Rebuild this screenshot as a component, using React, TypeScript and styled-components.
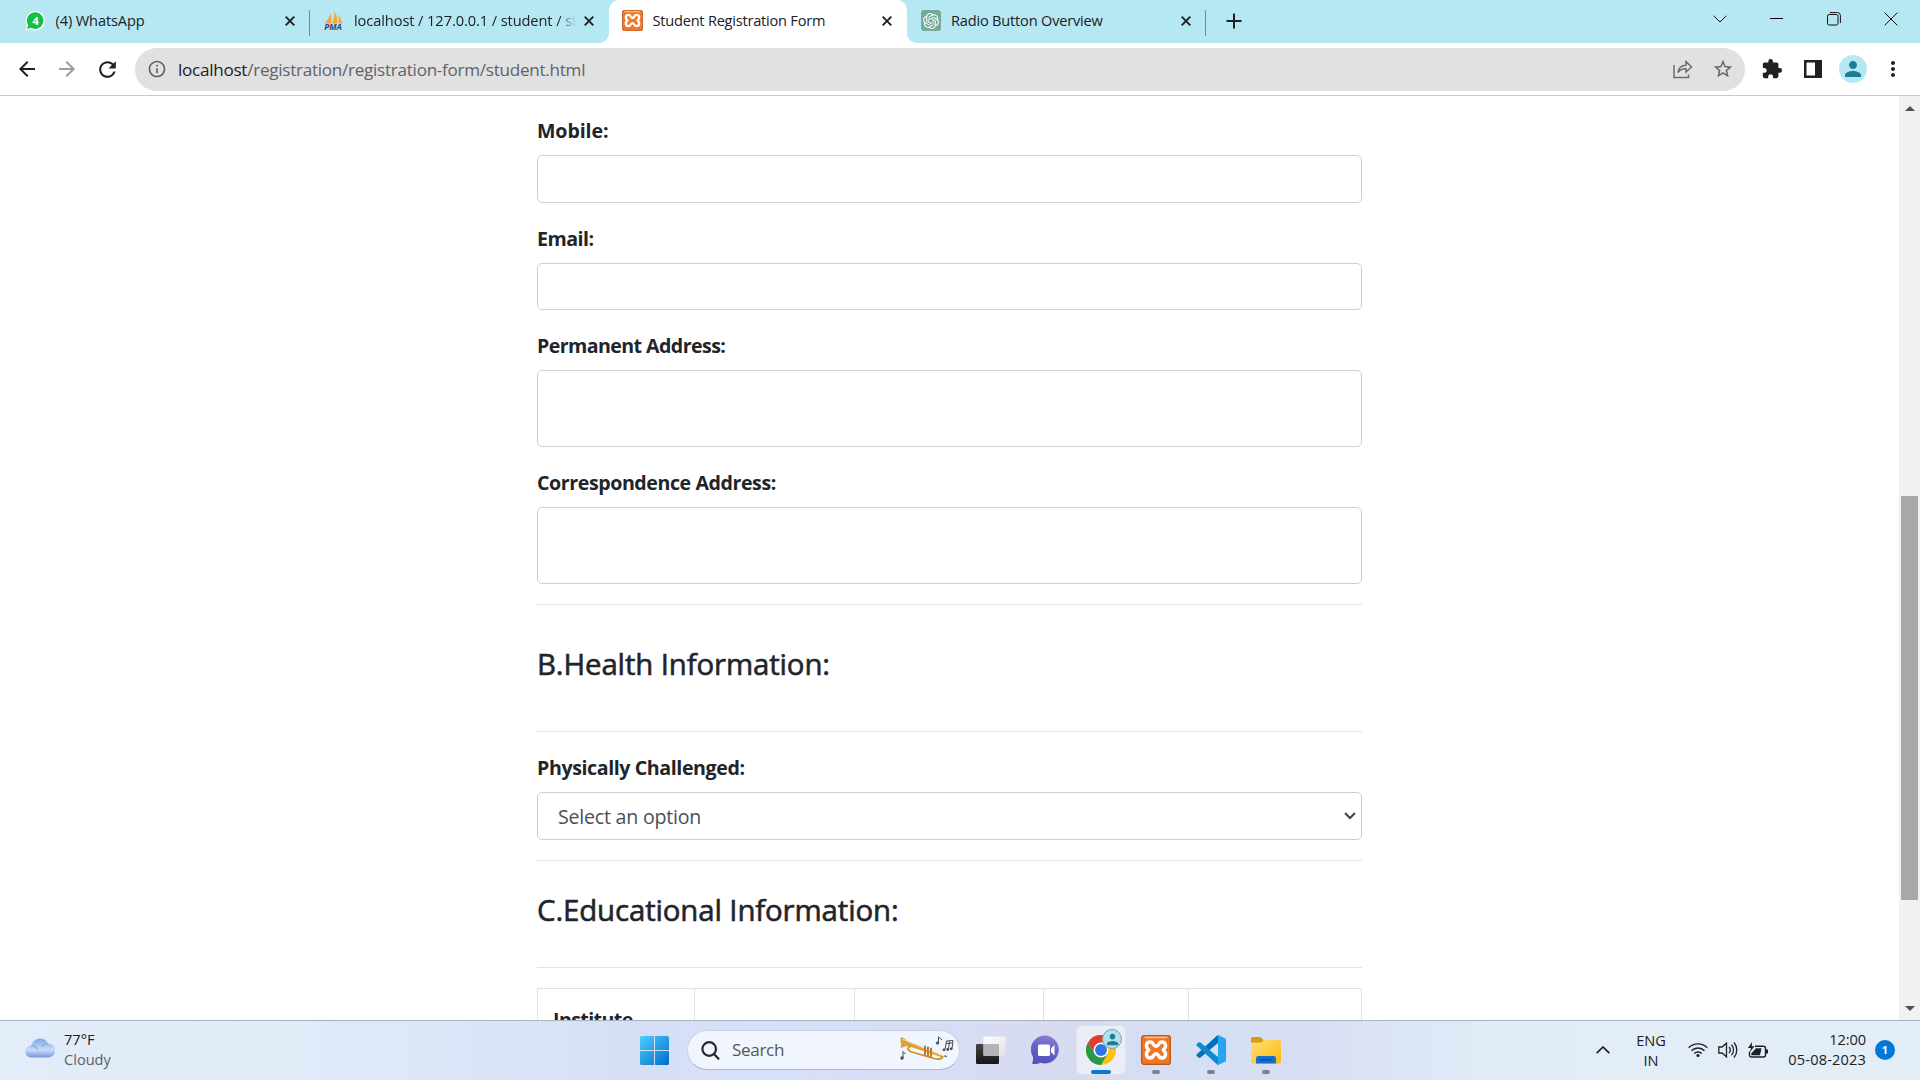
import React from "react";
import styled, { createGlobalStyle } from "styled-components";
import { MdArrowBack, MdArrowForward, MdRefresh, MdInfoOutline, MdStarBorder, MdExtension, MdPerson, MdMoreVert } from "react-icons/md";
import { SiOpenai } from "react-icons/si";

const Global = createGlobalStyle`
  * { box-sizing: border-box; }
  html, body { margin: 0; padding: 0; overflow: hidden; }
  body { font-family: "Open Sans", "Noto Sans", sans-serif; color: #212529; }
  svg { display: block; flex: none; }
`;

const Screen = styled.div`
  width: 1920px;
  height: 1080px;
  display: flex;
  flex-direction: column;
  background: #fff;
  overflow: hidden;
`;

const Label = styled.span<{ $size: number; $ls?: number; $color?: string; $weight?: number }>`
  font-size: ${(p) => p.$size}px;
  letter-spacing: ${(p) => p.$ls || 0}px;
  color: ${(p) => p.$color || "#202124"};
  font-weight: ${(p) => p.$weight || 400};
  white-space: nowrap;
`;

/* ---------- tab strip ---------- */
const TabStrip = styled.div`
  height: 43px;
  display: flex;
  background: #b5e8f3;
  padding-left: 11.5px;
  flex: none;
`;

const Tab = styled.div<{ $active?: boolean; $divider?: boolean }>`
  width: 298.5px;
  height: 43px;
  padding: 0 12px 2px 13px;
  display: flex;
  align-items: center;
  position: relative;
  background: ${(p) => (p.$active ? "#fff" : "transparent")};
  border-radius: 10px 10px 0 0;
  ${(p) =>
    p.$active
      ? `&::before, &::after { content: ""; position: absolute; bottom: 0; width: 10px; height: 10px; }
         &::before { left: -10px; background: radial-gradient(circle at 0 0, transparent 9.5px, #fff 10.5px); }
         &::after { right: -10px; background: radial-gradient(circle at 100% 0, transparent 9.5px, #fff 10.5px); }`
      : ""}
  ${(p) =>
    p.$divider
      ? `&::after { content: ""; position: absolute; right: 0; top: 10px; width: 1px; height: 26px; background: #6f8c93; }`
      : ""}
`;

const TabIcon = styled.div`
  width: 21px;
  height: 21px;
  margin-right: 10px;
  flex: none;
`;

const TabTitle = styled.div<{ $fade?: boolean }>`
  flex: 1;
  overflow: hidden;
  display: flex;
  margin-right: 5px;
  line-height: 24px;
  padding-bottom: 2px;
  ${(p) => (p.$fade ? "-webkit-mask-image: linear-gradient(90deg, #000 92%, transparent 100%);" : "")}
`;

const CloseBox = styled.div`
  width: 16px;
  height: 16px;
  flex: none;
  padding: 3px;
`;

const NewTab = styled.div`
  width: 56px;
  display: flex;
  align-items: center;
  justify-content: center;
  padding-bottom: 1px;
`;

const WindowControls = styled.div`
  margin-left: auto;
  padding-right: 1px;
  height: 37px;
  display: flex;
  align-items: center;
`;

const WinButton = styled.div`
  width: 57px;
  display: flex;
  justify-content: center;
`;

/* ---------- toolbar ---------- */
const Toolbar = styled.div`
  height: 53px;
  flex: none;
  display: flex;
  align-items: center;
  border-bottom: 1px solid #c8c9ca;
  padding: 0 8px 0 7px;
`;

const ToolButton = styled.div<{ $w?: number; $color?: string }>`
  width: ${(p) => p.$w || 40}px;
  height: 40px;
  display: flex;
  align-items: center;
  justify-content: center;
  color: ${(p) => p.$color || "#202124"};
`;

const Omnibox = styled.div`
  width: 1610px;
  height: 43px;
  margin-left: 8px;
  border-radius: 22px;
  background: #e1e1e1;
  display: flex;
  align-items: center;
  padding: 0 2px 0 2px;
`;

const Url = styled.div`
  flex: 1;
  padding-left: 1px;
  padding-top: 1px;
  line-height: 24px;
  white-space: nowrap;
`;

const Avatar = styled.div`
  width: 28px;
  height: 28px;
  border-radius: 50%;
  background: #b5e8f3;
  color: #1a7f95;
  display: flex;
  align-items: center;
  justify-content: center;
`;

/* ---------- page ---------- */
const Viewport = styled.div`
  height: 924px;
  flex: none;
  display: flex;
  overflow: hidden;
`;

const Page = styled.div`
  flex: 1;
  padding: 19px 0 0 537px;
`;

const Form = styled.div`
  width: 825px;
`;

const Group = styled.div<{ $top?: number }>`
  margin-bottom: 20px;
  padding-top: ${(p) => p.$top || 0}px;
`;

const FieldLabel = styled.label<{ $ls: number }>`
  display: block;
  height: 30px;
  margin-bottom: 10px;
  line-height: 31px;
  font-size: 19.6px;
  font-weight: 700;
  letter-spacing: ${(p) => p.$ls}px;
  white-space: nowrap;
`;

const Field = styled.div<{ $h: number }>`
  height: ${(p) => p.$h}px;
  border: 1px solid #cbd0d7;
  border-radius: 5px;
  display: flex;
  align-items: center;
  padding: 0 5px 0 20px;
  justify-content: space-between;
`;

const Rule = styled.div`
  height: 1px;
  background: #e3e4e5;
`;

const SectionTitle = styled.h2<{ $h: number; $top: number; $ls: number }>`
  margin: 0;
  height: ${(p) => p.$h}px;
  padding-top: ${(p) => p.$top}px;
  line-height: 40px;
  font-size: 29.4px;
  font-weight: 500;
  -webkit-text-stroke: 0.6px #212529;
  letter-spacing: ${(p) => p.$ls}px;
  white-space: nowrap;
`;

const Table = styled.div`
  margin-top: 20px;
  display: grid;
  grid-template-columns: 157px 160px 189px 145px 173px;
  border-top: 1px solid #dee2e6;
  border-left: 1px solid #dee2e6;
`;

const Cell = styled.div`
  height: 110px;
  border-right: 1px solid #dee2e6;
  padding: 15px;
  line-height: 31px;
`;

const Scrollbar = styled.div`
  width: 21px;
  background: #f1f1f1;
  display: flex;
  flex-direction: column;
  align-items: center;
  padding: 10px 0 9px;
`;

const Thumb = styled.div`
  width: 17px;
  height: 404px;
  margin: 385px 0 auto;
  background: #a8a8a8;
`;

/* ---------- taskbar ---------- */
const Taskbar = styled.div`
  height: 60px;
  flex: none;
  display: flex;
  align-items: center;
  padding-bottom: 1px;
  border-top: 1px solid #aab2c2;
  background: linear-gradient(90deg, #e2edf8 0, #e0ebf8 300px, #d9e2f7 560px, #d6def6 640px, #d5e2f9 760px, #d6ddf5 900px, #d8dbf0 1090px, #d4e0f5 1200px, #d8def3 1300px, #dfebf7 1480px, #e2edf8 1600px);
`;

const Weather = styled.div`
  width: 640px;
  padding: 0 0 3px 25px;
  display: flex;
  align-items: center;
  gap: 9px;
`;

const CloudIcon = styled.div`
  padding-bottom: 2px;
`;

const Stack = styled.div<{ $align?: string }>`
  display: flex;
  flex-direction: column;
  align-items: ${(p) => p.$align || "flex-start"};
  line-height: 20px;
`;

const SearchPill = styled.div`
  width: 273px;
  height: 40px;
  margin: 0 7px 0 18px;
  border-radius: 20px;
  background: #f1f5fd;
  border: 1px solid #c9d2e8;
  border-bottom-color: #aeb6c9;
  display: flex;
  align-items: center;
  padding: 0 4px 0 13px;
`;

const SearchText = styled.div`
  flex: 1;
  padding-left: 12px;
  line-height: 24px;
`;

const AppTile = styled.div<{ $active?: boolean }>`
  width: 48px;
  height: 48px;
  margin-right: 7px;
  border-radius: 5px;
  background: ${(p) => (p.$active ? "#ebeef8" : "transparent")};
  box-shadow: ${(p) => (p.$active ? "0 0 0 1px #dfe1ee" : "none")};
  display: flex;
  flex-direction: column;
  align-items: center;
  padding-top: 9px;
  position: relative;
`;

const Indicator = styled.div<{ $active?: boolean }>`
  width: ${(p) => (p.$active ? 20 : 8)}px;
  height: 4px;
  margin-top: auto;
  border-radius: 2px;
  background: ${(p) => (p.$active ? "#0a78d4" : "#7f838e")};
`;

const ProfileBadge = styled.div`
  position: absolute;
  left: 25px;
  top: 3px;
  width: 20px;
  height: 20px;
  border-radius: 50%;
  background: #aee2ee;
  border: 1px solid #8f9ca5;
  color: #1a7f95;
  display: flex;
  align-items: center;
  justify-content: center;
`;

const Tray = styled.div`
  margin-left: auto;
  display: flex;
  align-items: center;
  padding-right: 25px;
`;

const Language = styled.div`
  width: 40px;
  margin-left: 21px;
`;

const Clock = styled.div`
  width: 90px;
  padding-bottom: 2px;
`;

const TrayIcons = styled.div`
  display: flex;
  align-items: center;
  gap: 10px;
  margin: 0 8px 0 17px;
`;

const Count = styled.div`
  width: 20px;
  height: 20px;
  margin-left: 9px;
  border-radius: 50%;
  background: #0078d7;
  display: flex;
  align-items: center;
  justify-content: center;
  line-height: 20px;
`;

const Close = () => (
  <CloseBox>
    <svg width="10" height="10" viewBox="0 0 10 10" stroke="#202124" strokeWidth="1.9">
      <path d="M.7.7 9.3 9.3M9.3.7.7 9.3" />
    </svg>
  </CloseBox>
);

const WhatsApp = () => (
  <svg width="21" height="21" viewBox="0 0 21 21">
    <path d="M.8 20.3 2 15.4A9.6 9.6 0 1 1 5.6 19z" fill="#fff" />
    <path d="M2 19 3.2 15.2A8.3 8.3 0 1 1 6 17.8z" fill="#12c143" />
    <text x="10.6" y="14.6" fontSize="11" fontWeight="700" fill="#fff" textAnchor="middle" fontFamily="Open Sans">4</text>
  </svg>
);

const Pma = () => (
  <svg width="21" height="21" viewBox="0 0 21 21">
    <path d="M7.5 2.5Q7 8 1.5 13.5H8Q9 8 7.5 2.5M11 .5Q12.500 7 9 13.5H14.500Q14.500 6 11 .5M14.800 4Q16.500 8 15.500 13.500H19.500Q18 8 14.800 4" fill="#f8a536" />
    <text x="10" y="20.4" fontSize="8.4" fontWeight="700" fontStyle="italic" fill="#3f3f74" textAnchor="middle" fontFamily="Open Sans">PMA</text>
  </svg>
);

const Xampp = ({ size }: { size: number }) => (
  <svg width={size} height={size} viewBox="0 0 30 30">
    <rect x=".6" y=".6" width="28.8" height="28.8" rx="2.500" fill="#f37623" stroke="#b5561c" strokeWidth="1.200" />
    <path d="M3 1.600H27L25.500 3.200H4.500z" fill="#f7b98c" />
    <path d="M7.800 15C4 12 5 7 9.300 7C13 7 12 11.500 15 11.500S17 7 20.700 7C25 7 26 12 22.200 15C26 18 25 23 20.700 23C17 23 18 18.700 15 18.700S13 23 9.300 23C5 23 4 18 7.800 15z" fill="none" stroke="#fff" strokeWidth="3.400" strokeLinejoin="round" />
  </svg>
);

const OpenAIBox = styled.div`
  width: 20px;
  height: 21px;
  background: #74aa9c;
  border-radius: 3px;
  margin-left: 1px;
  color: #fff;
  display: flex;
  align-items: center;
  justify-content: center;
`;

const Trumpet = () => (
  <svg width="56" height="28" viewBox="0 0 56 28">
    <path d="M2 1.500C4 0 6 3.500 9 5.500L44 19.500 43.500 21.500 9 10C6 9.500 3 12.500 1.500 11.500C3 8 .5 5 2 1.500z" fill="#dda13a" />
    <path d="M3 3 44 20" stroke="#f8d68a" strokeWidth="1" />
    <path d="M12 10C7 11 9 15 13 16L35 22.500C41 24 44 22 43.500 20" fill="none" stroke="#d39125" strokeWidth="1.800" />
    <path d="M26 11V20M29 12V21M32 13V22" stroke="#c07f1c" strokeWidth="2" />
    <path d="M25 10.500h2M28 11.500h2M31 12.500h2M45 20l3 .6" stroke="#7d7d84" strokeWidth="1.500" />
    <path d="M4 22V15.500L6.500 18M39.500 7V.8L43 4M46 13.500 47.500 5 54 4.500 53 12.500M47 7.500 53.500 7M50.500 5 49.500 13" fill="none" stroke="#4a4c53" strokeWidth="1" />
    <g fill="#4a4c53"><circle cx="3" cy="22" r="1.700" /><circle cx="38.500" cy="7" r="1.600" /><circle cx="45" cy="13.800" r="1.400" /><circle cx="48.700" cy="13.500" r="1.400" /><circle cx="52.200" cy="12.800" r="1.400" /></g>
  </svg>
);

const WindowsLogo = () => (
  <svg width="29" height="29" viewBox="0 0 29 29">
    <defs><linearGradient id="win" gradientUnits="userSpaceOnUse" x1="0" y1="0" x2="26" y2="29"><stop stopColor="#4fd0fb" /><stop offset="1" stopColor="#0270cf" /></linearGradient></defs>
    <path d="M1.500 0H14V14H0V1.500Q0 0 1.500 0M15 0H27.500Q29 0 29 1.500V14H15zM0 15H14V29H1.500Q0 29 0 27.500zM15 15H29V27.500Q29 29 27.500 29H15z" fill="url(#win)" />
  </svg>
);

const TaskView = () => (
  <svg width="30" height="30" viewBox="0 0 30 30">
    <defs>
      <linearGradient id="tv1" x1="0" y1="0" x2="0" y2="1"><stop stopColor="#454545" /><stop offset="1" stopColor="#161616" /></linearGradient>
      <linearGradient id="tv2" x1="0" y1="0" x2="1" y2="1"><stop stopColor="#fff" /><stop offset="1" stopColor="#e2e2e6" /></linearGradient>
    </defs>
    <rect x="0" y="9" width="23" height="20" rx="1.200" fill="url(#tv1)" />
    <rect x="7.500" y="1.500" width="22" height="19.500" rx="1.200" fill="url(#tv2)" />
    <path d="M7.500 9H23V21H8.500Q7.500 21 7.500 20z" fill="#b3b3b5" />
  </svg>
);

const Chat = () => (
  <svg width="30" height="30" viewBox="0 0 30 30">
    <defs><linearGradient id="chat" x1=".7" y1="0" x2=".4" y2="1"><stop stopColor="#8d7fd0" /><stop offset=".5" stopColor="#6364c6" /><stop offset="1" stopColor="#5450bd" /></linearGradient></defs>
    <path d="M1 28.500Q2.300 26 2 22A14 14 0 1 1 9.500 27.800Q5 29.800 1 28.500z" fill="url(#chat)" />
    <rect x="7" y="9.500" width="12" height="11.500" rx="1.500" fill="#fff" />
    <path d="M20 13.500 23.500 10V20.500L20 17z" fill="#fff" />
  </svg>
);

const Chrome = () => (
  <svg width="30" height="30" viewBox="0 0 48 48">
    <circle cx="24" cy="24" r="24" fill="#fbc116" />
    <path d="M3.200 12A24 24 0 0 0 24 48L34.400 30 24 24 13.600 30z" fill="#279847" />
    <path d="M3.200 12 13.600 30 24 24V12H44.800A24 24 0 0 0 3.200 12z" fill="#e33b2e" />
    <circle cx="24" cy="24" r="12" fill="#fff" />
    <circle cx="24" cy="24" r="9.500" fill="#2d76e8" />
  </svg>
);

const VsCode = () => (
  <svg width="30" height="30" viewBox="0 0 30 30">
    <path d="M22 0 22 8 4.500 22.500Q3.500 23.200 2.500 22.500L.7 20.900Q0 20 .8 19.200L20.300 1.200z" fill="#0271b8" />
    <path d="M22 30V22L4.500 7.500Q3.500 6.800 2.500 7.500L.7 9.100Q0 10 .8 10.800L20.300 28.800z" fill="#1188cf" />
    <path d="M22 0 29 3.200Q30 3.700 30 4.800V25.200Q30 26.300 29 26.800L22 30Q20.800 29.600 20.300 28.800Q22 29.200 22 27.500V2.500Q22 .8 20.300 1.200Q20.800.4 22 0z" fill="#27a4ef" />
  </svg>
);

const Folder = () => (
  <svg width="30" height="30" viewBox="0 0 30 30">
    <defs><linearGradient id="fold" x1="0" y1="0" x2="1" y2="1"><stop stopColor="#ffdf78" /><stop offset="1" stopColor="#fdb90c" /></linearGradient></defs>
    <path d="M0 4Q0 2 2 2H9.500L13 5.500V9H0z" fill="#d99a0b" />
    <path d="M0 7.500H10L13 5H28.500Q30 5 30 7V26.500Q30 28.500 28 28.500H2Q0 28.500 0 26.500z" fill="url(#fold)" />
    <path d="M5 28.500V23.500Q5 21 7.500 21H22.500Q25 21 25 23.500V28.500z" fill="#0f72d0" />
    <path d="M8.500 24.800h13" stroke="#0a4590" strokeWidth="1.200" />
  </svg>
);

const fields = [
  { name: "Mobile:", h: 48, ls: -0.1 },
  { name: "Email:", h: 47, ls: -0.5 },
  { name: "Permanent Address:", h: 77, ls: -0.57 },
  { name: "Correspondence Address:", h: 77, ls: -0.42 },
];

export default function App() {
  return (
    <Screen>
      <Global />
      <TabStrip>
        <Tab $divider>
          <TabIcon><WhatsApp /></TabIcon>
          <TabTitle><Label $size={14.6} $ls={-0.12}>(4) WhatsApp</Label></TabTitle>
          <Close />
        </Tab>
        <Tab>
          <TabIcon><Pma /></TabIcon>
          <TabTitle $fade><Label $size={14.6} $ls={-0.08}>localhost / 127.0.0.1 / student / st</Label></TabTitle>
          <Close />
        </Tab>
        <Tab $active>
          <TabIcon><Xampp size={21} /></TabIcon>
          <TabTitle><Label $size={14.6} $ls={-0.23}>Student Registration Form</Label></TabTitle>
          <Close />
        </Tab>
        <Tab $divider>
          <TabIcon><OpenAIBox><SiOpenai size={16} /></OpenAIBox></TabIcon>
          <TabTitle><Label $size={14.6} $ls={-0.2}>Radio Button Overview</Label></TabTitle>
          <Close />
        </Tab>
        <NewTab>
          <svg width="16" height="16" viewBox="0 0 16 16" stroke="#202124" strokeWidth="2"><path d="M8 .5v15M.5 8h15" /></svg>
        </NewTab>
        <WindowControls>
          <WinButton><svg width="14" height="8" viewBox="0 0 14 8" fill="none" stroke="#111"><path d="M.7.8 7 7 13.300.8" /></svg></WinButton>
          <WinButton><svg width="13" height="1" viewBox="0 0 13 1" shapeRendering="crispEdges"><path d="M0 .5h13" stroke="#000" /></svg></WinButton>
          <WinButton>
            <svg width="14" height="14" viewBox="0 0 14 14" fill="none" stroke="#111"><rect x=".5" y="2.500" width="10.500" height="10.500" rx="1.800" /><path d="M2.800.6H10.500Q13.400.6 13.400 3.500V11" /></svg>
          </WinButton>
          <WinButton><svg width="14" height="14" viewBox="0 0 14 14" stroke="#111"><path d="M.6.6 13.400 13.400M13.400.6.6 13.400" /></svg></WinButton>
        </WindowControls>
      </TabStrip>

      <Toolbar>
        <ToolButton><MdArrowBack size={24} /></ToolButton>
        <ToolButton $color="#9b9c9e"><MdArrowForward size={24} /></ToolButton>
        <ToolButton><MdRefresh size={25} /></ToolButton>
        <Omnibox>
          <ToolButton $color="#5f6368"><MdInfoOutline size={20} /></ToolButton>
          <Url>
            <Label $size={17.1} $ls={-0.27}>localhost</Label>
            <Label $size={17.1} $ls={-0.27} $color="#5f6368">/registration/registration-form/student.html</Label>
          </Url>
          <ToolButton>
            <svg width="20" height="19" viewBox="0 0 20 19" fill="none" stroke="#6b6e72" strokeWidth="1.500"><path d="M1 5v12.500h14.500V14.500M5 12.500C5.500 8 8.500 5.500 13 5.300V1.500L18.500 7 13 12V8.800C9.500 8.700 7 9.500 5 12.500z" /></svg>
          </ToolButton>
          <ToolButton $color="#5f6368"><MdStarBorder size={22} /></ToolButton>
        </Omnibox>
        <ToolButton $w={54}><MdExtension size={22} /></ToolButton>
        <ToolButton $w={28}>
          <svg width="18" height="18" viewBox="0 0 18 18"><path d="M0 0H18V18H0zM2.500 2.500V15.500H11V2.500z" fill="#202124" fillRule="evenodd" /></svg>
        </ToolButton>
        <ToolButton $w={52}><Avatar><MdPerson size={24} /></Avatar></ToolButton>
        <ToolButton $w={28}><MdMoreVert size={24} /></ToolButton>
      </Toolbar>

      <Viewport>
        <Page>
          <Form>
            {fields.map((f) => (
              <Group key={f.name}>
                <FieldLabel $ls={f.ls}>{f.name}</FieldLabel>
                <Field $h={f.h} />
              </Group>
            ))}
            <Rule />
            <SectionTitle $h={126} $top={39} $ls={-0.12}>B.Health Information:</SectionTitle>
            <Rule />
            <Group $top={20}>
              <FieldLabel $ls={-0.4}>Physically Challenged:</FieldLabel>
              <Field $h={48}>
                <Label $size={19.6} $color="#495057" $ls={-0.22}>Select an option</Label>
                <svg width="12" height="8" viewBox="0 0 12 8" fill="none" stroke="#3f454c" strokeWidth="2"><path d="M1 1 6 6 11 1" /></svg>
              </Field>
            </Group>
            <Rule />
            <SectionTitle $h={106} $top={29} $ls={-0.12}>C.Educational Information:</SectionTitle>
            <Rule />
            <Table>
              <Cell><Label $size={19.6} $weight={700} $ls={-0.6} $color="#212529">Institute</Label></Cell>
              <Cell />
              <Cell />
              <Cell />
              <Cell />
            </Table>
          </Form>
        </Page>
        <Scrollbar>
          <svg width="10" height="5" viewBox="0 0 10 5"><path d="M5 0 10 5H0z" fill="#505050" /></svg>
          <Thumb />
          <svg width="10" height="5" viewBox="0 0 10 5"><path d="M0 0H10L5 5z" fill="#505050" /></svg>
        </Scrollbar>
      </Viewport>

      <Taskbar>
        <Weather>
          <CloudIcon>
            <svg width="30" height="20" viewBox="0 0 30 20">
              <defs><linearGradient id="cl" x1="0" y1="0" x2="0" y2="1"><stop stopColor="#7ea6e4" /><stop offset=".6" stopColor="#c9dbf8" /><stop offset="1" stopColor="#7397dc" /></linearGradient></defs>
              <path d="M6 19.500A5.800 5.800 0 0 1 6 7.800Q9 .5 15 .5Q20.500.5 23 5.500A7 7 0 0 1 23.500 19.500z" fill="url(#cl)" />
              <path d="M6 7.800Q11 7.500 12.500 11.500M16.500 8.500Q19 5.500 23 5.500" fill="none" stroke="#86a9e2" strokeWidth="1.200" />
            </svg>
          </CloudIcon>
          <Stack><Label $size={14.6}>77°F</Label><Label $size={14.6} $color="#5c6168">Cloudy</Label></Stack>
        </Weather>
        <WindowsLogo />
        <SearchPill>
          <svg width="19" height="19" viewBox="0 0 19 19" fill="none" stroke="#26282c" strokeWidth="2.200"><circle cx="8.200" cy="8" r="6.800" /><path d="M13 13 18 18.300" /></svg>
          <SearchText><Label $size={17.1} $ls={-0.35} $color="#54575e">Search</Label></SearchText>
          <Trumpet />
        </SearchPill>
        <AppTile><TaskView /></AppTile>
        <AppTile><Chat /></AppTile>
        <AppTile $active>
          <Chrome />
          <ProfileBadge><MdPerson size={17} /></ProfileBadge>
          <Indicator $active />
        </AppTile>
        <AppTile><Xampp size={30} /><Indicator /></AppTile>
        <AppTile><VsCode /><Indicator /></AppTile>
        <AppTile><Folder /><Indicator /></AppTile>
        <Tray>
          <svg width="14" height="8" viewBox="0 0 14 8" fill="none" stroke="#222" strokeWidth="1.700"><path d="M.7 7.200 7 1 13.300 7.200" /></svg>
          <Language><Stack $align="center"><Label $size={14.6}>ENG</Label><Label $size={14.6}>IN</Label></Stack></Language>
          <TrayIcons>
            <svg width="20" height="16" viewBox="0 0 20 16" fill="none" stroke="#1d1f22" strokeWidth="1.400"><path d="M.7 5.800A13 13 0 0 1 19.300 5.800M3.500 8.800A9 9 0 0 1 16.500 8.800M6.300 11.500A5.300 5.300 0 0 1 13.700 11.500" /><circle cx="10" cy="13.500" r="1.600" fill="#1d1f22" stroke="none" /></svg>
            <svg width="20" height="18" viewBox="0 0 20 18" fill="none" stroke="#1d1f22" strokeWidth="1.300"><path d="M.8 6H4L8.500 2.200V15.800L4 12H.8zM11 6A4.500 4.500 0 0 1 11 12M13.500 3.700A8 8 0 0 1 13.500 14.300M16 1.500A11.500 11.500 0 0 1 16 16.500" /></svg>
            <svg width="20" height="17" viewBox="0 0 20 17"><path d="M7 4.200H15.500Q17.500 4.200 17.500 6.200V13Q17.500 15 15.500 15H3.500Q1.500 15 1.500 13V9.500" fill="none" stroke="#1d1f22" strokeWidth="1.400" /><path d="M8 6.200H13.500L12 13.200H3.300V11.500zM18 7.500H20V11.500H18zM4 0 0 6H3L2 10 6.500 4.300H3.800z" fill="#1d1f22" /></svg>
          </TrayIcons>
          <Clock><Stack $align="flex-end"><Label $size={14.6} $ls={-0.1}>12:00</Label><Label $size={14.6} $ls={0.15}>05-08-2023</Label></Stack></Clock>
          <Count><Label $size={11} $weight={700} $color="#fff">1</Label></Count>
        </Tray>
      </Taskbar>
    </Screen>
  );
}
